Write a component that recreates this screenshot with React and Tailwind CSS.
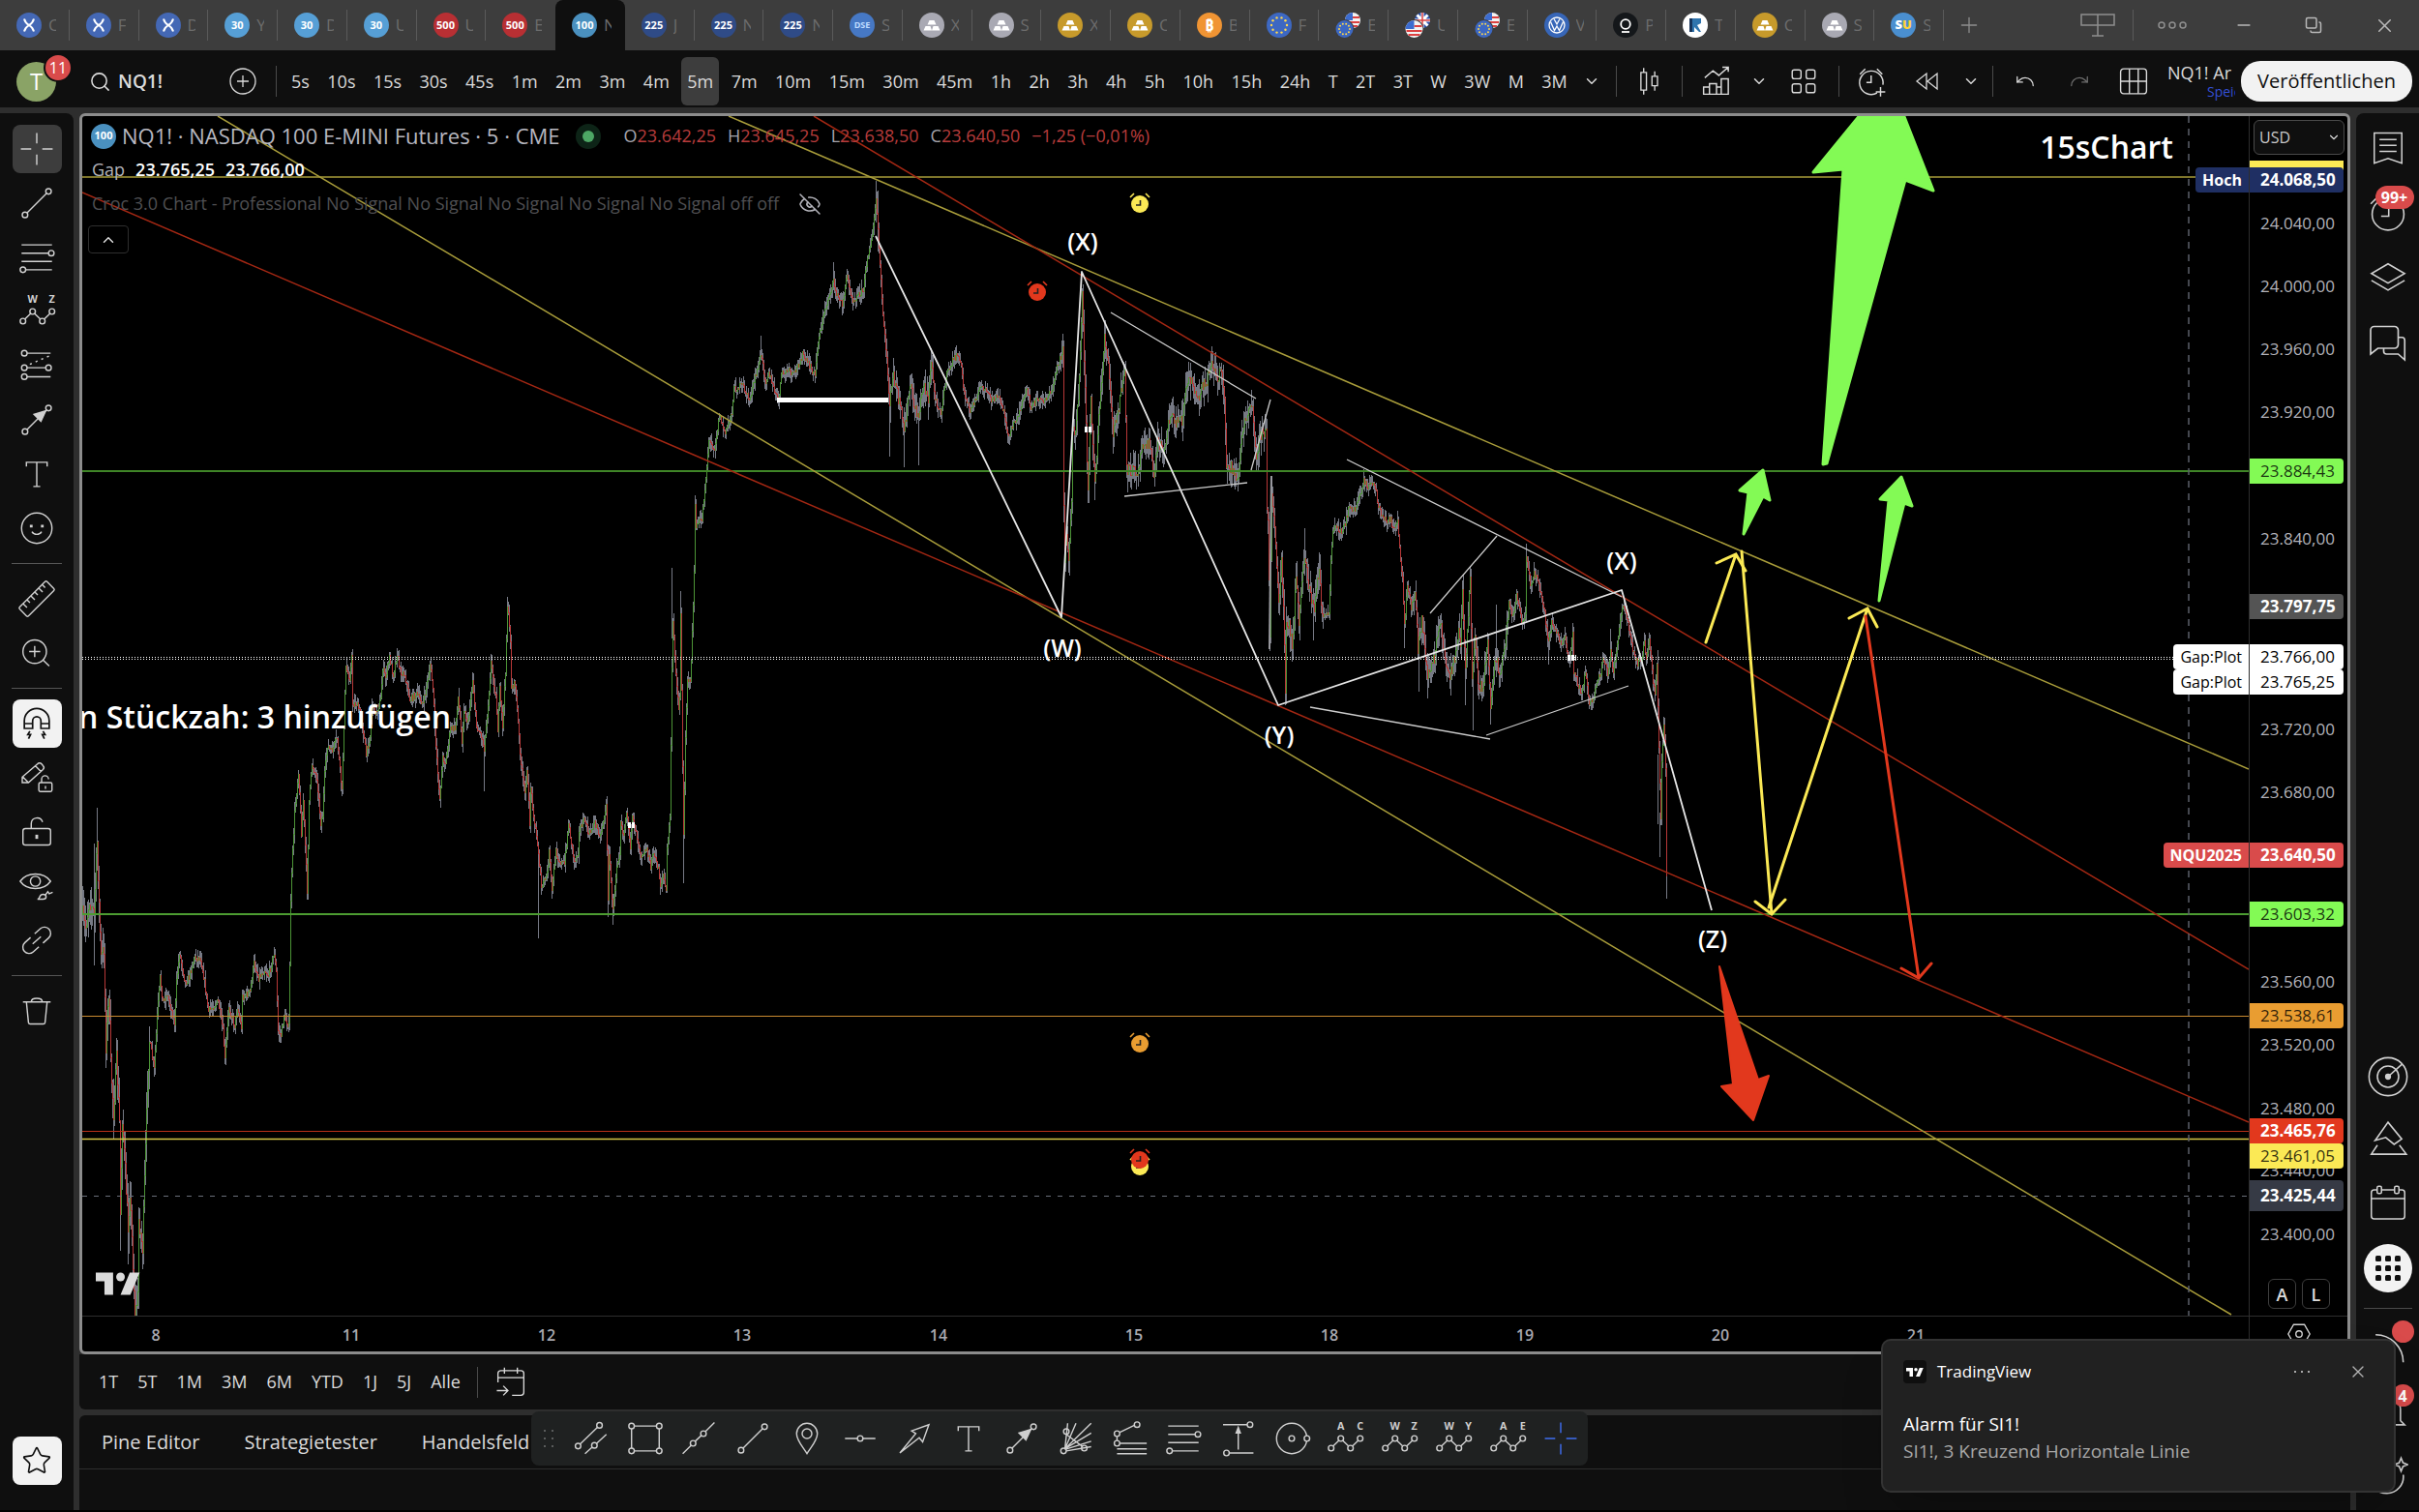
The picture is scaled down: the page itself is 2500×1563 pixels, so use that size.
import React from 'react';
import {
    Plus, Minus, X, Search, ChevronDown, ChevronUp, EyeOff, Copy, Star, Undo, Redo
} from 'lucide-react';

const TABS = [
    ['x', 'C'], ['x', 'F'], ['x', 'D'], ['30', 'Y'], ['30', 'D'], ['30', 'U'], ['500', 'U'], ['500', 'E'],
    ['100', 'N'], ['225', 'J'], ['225', 'N'], ['225', 'N'], ['dxy', 'S'], ['silver', 'X'], ['silver', 'S'],
    ['gold', 'X'], ['gold', 'C'], ['btc', 'B'], ['eu', 'F'], ['euus', 'E'], ['usgb', 'U'], ['euus', 'E'],
    ['vw', 'V'], ['pal', 'P'], ['rh', 'T'], ['gold', 'C'], ['silver', 'S'], ['su', 'S'],
];

const INTERVALS = [
    '5s', '10s', '15s', '30s', '45s', '1m', '2m', '3m', '4m', '5m', '7m', '10m', '15m', '30m', '45m',
    '1h', '2h', '3h', '4h', '5h', '10h', '15h', '24h', 'T', '2T', '3T', 'W', '3W', 'M', '3M',
];

const RANGES = ['1T', '5T', '1M', '3M', '6M', 'YTD', '1J', '5J', 'Alle'];

// price path of the 5m futures, x,y in plot units
const PATH = `85,945 88,958 92,930 97,945 99,890 100,870 102,935 104,990 107,980 109,1080 112,1025 114,1100 117,1150
120,1095 123,1160 124,1255 126,1155 129,1210 132,1270 134,1230 137,1305 139,1359 142,1340 143,1260 147,1290 149,1220
152,1120 154,1075 159,1105 162,1050 165,1010 168,1035 172,1027 176,1040 180,1057 182,1015 185,984 191,1015 195,1010
200,990 207,990 211,1015 215,1045 220,1040 225,1035 230,1065 232,1095 236,1040 242,1060 245,1040 249,1062 250,1030
258,1025 262,995 267,1010 273,1002 277,1008 283,985 285,1005 287,1065 290,1070 293,1050 298,1060 299,1000 300,930
302,880 304,840 308,797 311,860 313,827 317,920 319,827 322,790 327,803 331,850 333,843 335,800 338,770 342,777
348,763 353,818 355,747 357,690 361,700 363,680 364,727 368,727 373,740 378,780 382,760 384,727 388,737 393,723
395,690 398,700 402,679 406,697 410,675 413,693 418,697 423,723 430,717 437,727 442,700 444,686 447,710 450,773
454,825 457,783 460,788 465,753 470,753 473,720 477,765 479,733 483,747 487,713 488,702 492,750 497,760 500,773
504,727 507,684 512,720 514,753 516,713 519,750 522,693 524,625 527,660 528,710 532,707 535,747 538,790 542,820
544,793 547,850 548,813 552,850 556,880 559,918 565,903 567,880 570,920 574,880 578,890 583,893 587,850 593,890
597,880 598,857 604,847 608,863 614,850 620,863 626,833 628,927 629,880 633,942 637,893 640,880 641,847 644,863
647,837 651,880 653,840 657,860 662,883 668,877 672,897 674,880 680,897 682,915 685,903 688,922 689,877 692,843
694,693 695,643 698,693 701,733 702,720 703,632 705,793 706,865 708,760 710,700 713,707 715,653 717,593 718,524
719,543 725,536 729,494 732,455 738,463 743,429 749,448 756,425 758,402 767,398 774,413 778,398 783,379 786,366
791,394 794,383 798,398 804,415 807,387 814,383 820,387 829,366 834,375 842,387 845,352 850,329 856,306 861,291
865,306 870,314 875,285 881,310 892,299 896,264 901,245 905,205 908,256 912,325 916,371 919,417 923,387 929,417
934,444 940,398 946,425 949,429 954,394 959,413 962,373 966,413 972,425 978,387 986,368 992,371 996,406 1002,425
1008,410 1015,398 1024,413 1032,410 1038,429 1042,452 1048,436 1055,421 1061,402 1065,421 1071,413 1078,413
1086,406 1091,383 1095,370 1098,358 1099,524 1100,578 1102,547 1104,584 1107,524 1108,448 1112,440 1115,394
1118,295 1120,371 1124,505 1127,410 1131,500 1134,448 1138,394 1141,347 1145,379 1150,448 1155,425 1162,382
1164,486 1175,486 1181,456 1187,456 1192,492 1196,456 1202,463 1210,425 1213,436 1221,433 1225,402 1231,390
1238,415 1241,394 1246,398 1252,370 1257,394 1261,383 1265,410 1267,482 1272,482 1279,496 1283,452 1288,429
1294,421 1298,468 1303,448 1308,448 1309,524 1310,540 1312,655 1314,510 1317,540 1321,627 1324,580 1326,627
1328,718 1329,647 1332,647 1335,668 1339,597 1342,640 1348,573 1352,603 1358,633 1360,607 1363,590 1366,635
1373,637 1375,580 1377,550 1381,543 1385,550 1390,540 1394,523 1400,527 1405,510 1409,495 1413,503 1420,498
1424,523 1430,537 1437,537 1440,547 1444,540 1447,580 1449,600 1451,647 1454,607 1458,627 1462,613 1465,670
1469,640 1475,698 1482,680 1485,657 1488,642 1493,683 1498,697 1503,680 1507,653 1509,673 1511,607 1514,690
1519,595 1521,700 1524,657 1528,715 1533,703 1537,663 1540,731 1543,693 1546,680 1550,697 1555,670 1559,620
1563,637 1567,613 1572,641 1576,637 1577,573 1581,603 1585,593 1589,600 1593,617 1598,647 1600,665 1603,643
1613,665 1617,657 1621,683 1625,653 1626,693 1634,718 1638,693 1642,727 1646,723 1650,703 1654,697 1656,677
1661,697 1664,673 1667,695 1672,657 1677,623 1681,640 1687,673 1692,685 1696,680 1699,663 1701,685 1704,660
1708,705 1710,717 1712,687 1714,773 1716,847 1717,790 1719,747 1721,790 1722,907`;

// long wicks: x, top, bottom
const SPIKES = [
    [97, 872, 998], [100, 835, 900], [124, 1240, 1293], [132, 1260, 1307], [500, 760, 818], [556, 870, 970],
    [524, 617, 640], [628, 900, 948], [633, 930, 956], [694, 587, 660], [703, 611, 640], [706, 850, 913],
    [786, 347, 370], [861, 271, 300], [905, 187, 230], [907, 197, 260], [919, 410, 472], [934, 430, 483],
    [949, 420, 481], [1124, 480, 520], [1131, 480, 517], [1098, 351, 380], [1252, 358, 380], [1165, 480, 509],
    [1312, 620, 671], [1314, 492, 540], [1328, 700, 729], [1348, 546, 590], [1357, 630, 662], [1451, 630, 670],
    [1466, 670, 715], [1475, 690, 722], [1519, 587, 610], [1514, 690, 729], [1522, 700, 755], [1540, 720, 749],
    [1546, 625, 700], [1577, 562, 600], [1600, 660, 687], [1625, 645, 680], [1664, 650, 690], [1713, 672, 700],
    [1713, 780, 852], [1715, 840, 886], [1719, 741, 770], [1722, 853, 929], [1104, 560, 592],
];

function buildCandles() {
    const pts = PATH.trim().split(/\s+/).map(p => p.split(',').map(Number));
    let seed = 7;
    const rnd = () => {
        seed = (seed * 16807) % 2147483647;
        return seed / 2147483647;
    };
    let wick = '';
    let up = '';
    let down = '';
    let prev = pts[0][1];
    let i = 0;
    for (let x = 85; x <= 1722; x++) {
        while (i < pts.length - 2 && pts[i + 1][0] < x) i++;
        const [x0, y0] = pts[i];
        const [x1, y1] = pts[i + 1];
        const wild = x < 155 ? 22 : (x > 1095 && x < 1370) || (x > 915 && x < 965) ? 17 : x > 1460 && x < 1560 ? 16 : 9;
        const y = y0 + ((y1 - y0) * (x - x0)) / (x1 - x0) + (rnd() - 0.5) * wild * 0.8;
        const hi = Math.min(prev, y);
        const lo = Math.max(prev, y);
        const px = x + 0.5;
        wick += `M${px} ${Math.round(hi - rnd() * wild)}V${Math.round(lo + 1 + rnd() * wild)}`;
        const seg = `M${px} ${Math.round(hi)}V${Math.round(lo) + 1}`;
        if (y < prev) up += seg;
        else down += seg;
        prev = y;
    }
    SPIKES.forEach(([x, a, b]) => { wick += `M${x + 0.5} ${a}V${b}`; });
    return { wick, up, down };
}

const CANDLES = buildCandles();

const PRICES = [
    ['24.040,00', 231], ['24.000,00', 296], ['23.960,00', 361], ['23.920,00', 426], ['23.840,00', 557],
    ['23.720,00', 754], ['23.680,00', 819], ['23.560,00', 1015], ['23.520,00', 1080], ['23.480,00', 1146],
    ['23.440,00', 1210], ['23.400,00', 1276],
];

const TAGS = [
    { v: '24.068,50', y: 186, label: 'Hoch', c: 'h-[26px] bg-[#1f2f63] text-white font-bold' },
    { v: '23.884,43', y: 487, c: 'h-[26px] bg-[#83fa55] text-black/80' },
    { v: '23.797,75', y: 627, c: 'h-[26px] bg-[#545454] text-white font-bold' },
    { v: '23.766,00', y: 679, label: 'Gap:Plot', c: 'h-[26px] bg-white text-black' },
    { v: '23.765,25', y: 705, label: 'Gap:Plot', c: 'h-[26px] bg-white text-black' },
    { v: '23.640,50', y: 884, label: 'NQU2025', c: 'h-[26px] bg-[#d94b4b] text-white font-bold' },
    { v: '23.603,32', y: 945, c: 'h-[26px] bg-[#83fa55] text-black/80' },
    { v: '23.538,61', y: 1050, c: 'h-[26px] bg-[#e99d31] text-black/80' },
    { v: '23.465,76', y: 1169, c: 'h-[26px] bg-[#e2381d] text-white font-bold' },
    { v: '23.461,05', y: 1195, c: 'h-[26px] bg-[#fbe955] text-black/80' },
    { v: '23.425,44', y: 1236, c: 'h-[32px] bg-[#363a45] text-white font-bold' },
];

const DAYS = [['8', 161], ['11', 363], ['12', 565], ['13', 767], ['14', 970], ['15', 1172], ['18', 1374], ['19', 1576], ['20', 1778], ['21', 1980]];

/* ---------- icons ---------- */

function Icon({ className = 'size-10', w = 1, children }) {
    return (
        <svg viewBox="0 0 28 28" className={className} fill="none" stroke="currentColor" strokeWidth={w} aria-hidden="true">
            {children}
        </svg>
    );
}

const CrossIcon = () => <Icon><path d="M14 2.500V10M14 18v7.500M2.500 14H10M18 14h7.500" /></Icon>;
const LineIcon = () => (
    <Icon><circle cx="5.500" cy="22.500" r="2" /><circle cx="22.500" cy="5.500" r="2" /><path d="M7 21 21 7" /></Icon>
);
const FibIcon = () => (
    <Icon><path d="M3 5h22M3 11h19.500M3 17h22M6 23h19" /><circle cx="24.500" cy="11" r="2" /><circle cx="4" cy="23" r="2" /></Icon>
);
const WaveIcon = ({ a, b }) => (
    <Icon>
        <text x="11" y="7.500" fontSize="7.500" fontWeight="700" textAnchor="middle" fill="currentColor" stroke="none">{a}</text>
        <text x="25" y="7.500" fontSize="7.500" fontWeight="700" textAnchor="middle" fill="currentColor" stroke="none">{b}</text>
        <circle cx="4" cy="21" r="2" /><circle cx="11" cy="14" r="2" /><circle cx="18" cy="21" r="2" /><circle cx="25" cy="14" r="2" />
        <path d="m5.500 19.500 4-4M12.500 15.500l4 4M19.500 19.500l4-4" />
    </Icon>
);
const ForecastIcon = () => (
    <Icon>
        <circle cx="5" cy="5" r="2" /><circle cx="5" cy="15.500" r="2" /><circle cx="5" cy="22" r="2" /><circle cx="22.500" cy="15.500" r="2" />
        <path d="M7 5h17M7 15.500h13.500M7 22h17" /><path d="M9 13 23 7" strokeDasharray="1.500 3" />
    </Icon>
);
const ArrowMarkIcon = () => (
    <Icon>
        <circle cx="5.500" cy="22.500" r="2" /><circle cx="22.500" cy="5.500" r="2" /><path d="M7 21 21 7" />
        <path d="m20.500 7.500-3.500 7.500-5-5z" fill="currentColor" />
    </Icon>
);
const TextIcon = () => <Icon><path d="M6.500 8.500V5.500h15v3M14 5.500v17.500M11.500 23h5" /></Icon>;
const SmileIcon = () => (
    <Icon><circle cx="14" cy="14" r="11" /><path d="M10 11.500v2M18 11.500v2" strokeWidth="2" /><path d="M10.500 16.500c1.500 2.600 5.500 2.600 7 0" /></Icon>
);
const RulerIcon = () => (
    <Icon>
        <g transform="rotate(-45 14 14)"><rect x="0" y="9.500" width="28" height="9" rx="1" /><path d="M4.500 9.500v4M8.500 9.500v3M12.500 9.500v4M16.500 9.500v3M20.500 9.500v4M24 9.500v3" /></g>
    </Icon>
);
const ZoomIcon = () => <Icon><circle cx="12.500" cy="13" r="8.500" /><path d="M12.500 9v8M8.500 13h8M18.500 19l4.500 4.500" /></Icon>;
const MagnetIcon = () => (
    <Icon w={1.2}>
        <path d="M5 17.500V12a9 9 0 0 1 18 0v5.500h-6V12a3 3 0 0 0-6 0v5.500zM5 14h6M17 14h6" />
        <path d="m9 19.500-1.500 2.500h2L8 25M18.500 19.500l1.500 2.500h-2L19.500 25" />
    </Icon>
);
const PencilLockIcon = () => (
    <Icon>
        <path d="M3.500 17.500v-4L14.500 4a2 2 0 0 1 3 0l1 1.200a2 2 0 0 1 0 2.800L8 17.500zM4 13.500l4 4M13 5.500l4 4" />
        <rect x="15.500" y="17.500" width="9.500" height="6.500" rx="1" /><path d="M17.500 17.500V15a2.500 2.500 0 0 1 5 0M20.300 20v2" />
    </Icon>
);
const LockIcon = () => (
    <Icon><rect x="4" y="11.500" width="20" height="12" rx="1.800" /><path d="M10 11.500V8a4.200 4.200 0 0 1 8.200-1.200" /><path d="M14 16v3" strokeWidth="2" /></Icon>
);
const EyeIcon = () => (
    <Icon>
        <path d="M2 10.500C7 3.500 19 3.500 24 10.500 19 17.500 7 17.500 2 10.500z" /><circle cx="13" cy="10.500" r="3.600" />
        <path d="M14.500 23.500c2 0 1-3.500 4-3.500 3 0 3 3.500 0 3.500zM20.500 20l1.500-2 1 1.500 2.500-1" />
    </Icon>
);
const LinkIcon = () => (
    <Icon>
        <g transform="rotate(-42 14 14)"><path d="M12 9.500H6.500a4.500 4.500 0 0 0 0 9H12M16 9.500h5.500a4.500 4.500 0 0 1 0 9H16M10 14h8" /></g>
    </Icon>
);
const TrashIcon = () => <Icon><path d="M4 7.500h20M10 7.500c0-3.500 8-3.500 8 0M6.500 7.500l1.500 15c.1.600.5 1 1.200 1h9.600c.7 0 1.100-.4 1.200-1l1.500-15" /></Icon>;

const ChannelIcon = () => (
    <Icon><circle cx="4.500" cy="19.500" r="2" /><circle cx="20" cy="4.500" r="2" /><path d="M6 18 18.500 6M9.500 25l5-4.500M18 17.500l7-6.500" /><circle cx="16.300" cy="19" r="2" /></Icon>
);
const RectIcon = () => (
    <Icon>
        <circle cx="4" cy="5" r="2" /><circle cx="24" cy="5" r="2" /><circle cx="4" cy="23" r="2" /><circle cx="24" cy="23" r="2" />
        <path d="M6 5h16M6 23h16M4 7v14M24 7v14" />
    </Icon>
);
const ExtIcon = () => (
    <Icon><circle cx="10" cy="17.500" r="2" /><circle cx="17.500" cy="10.500" r="2" /><path d="m2.500 25 6-6M11.500 16l4.500-4.200M19 9l6.500-6.500" /></Icon>
);
const PinIcon = () => <Icon><path d="M14 25C11 20 6.500 15.500 6.500 10.500a7.500 7.500 0 0 1 15 0C21.500 15.500 17 20 14 25z" /><circle cx="14" cy="10.500" r="3.500" /></Icon>;
const HLineIcon = () => <Icon><path d="M3 14h9M16 14h9" /><circle cx="14" cy="14" r="2" /></Icon>;
const ArrowIcon = () => <Icon><path d="M3.500 24.500 15 10.500l-3-2L24.500 4 20 16.500l-2.500-3z" /></Icon>;
const FanIcon = () => (
    <Icon>
        <circle cx="5" cy="23" r="2" /><circle cx="7" cy="9" r="2" /><circle cx="20" cy="21" r="2" />
        <path d="M6 21.500 8 3M6 21.500 14 3M6 21.500 25 3M6 21.500 25 10M6 22l19-6M7 23l18-3M7 11l12 9" />
    </Icon>
);
const FibExtIcon = () => (
    <Icon>
        <circle cx="4.500" cy="10.500" r="2" /><circle cx="19" cy="4" r="2" /><circle cx="4.500" cy="17.500" r="2" />
        <path d="M6.500 9.500l10.500-5M4.500 12.500v3M6.500 17.500H26M4.500 21.500H26M4.500 25H26" />
    </Icon>
);
const RangeIcon = () => (
    <Icon><circle cx="23" cy="4" r="2" /><circle cx="6" cy="24.500" r="2" /><path d="M3.500 4H21M8 24.500h17.500M14.500 22V7" /><path d="m13 10 1.500-4 1.500 4z" fill="currentColor" /></Icon>
);
const CircleIcon = () => <Icon><circle cx="14" cy="14" r="11" /><circle cx="14" cy="14" r="2" /><circle cx="25" cy="14" r="2" fill="#1f2121" /></Icon>;

const SIDE_GROUPS = [
    [['Fadenkreuz', CrossIcon, 'bg-[#3d3d3d]'], ['Trendlinie', LineIcon], ['Fibonacci', FibIcon], ['Elliott', () => <WaveIcon a="W" b="Z" />], ['Prognose', ForecastIcon], ['Pfeil', ArrowMarkIcon], ['Text', TextIcon], ['Smiley', SmileIcon]],
    [['Lineal', RulerIcon], ['Zoom', ZoomIcon]],
    [['Magnet', MagnetIcon, 'bg-[#f2f2f2] text-[#0f0f0f]'], ['Zeichenmodus', PencilLockIcon], ['Sperren', LockIcon], ['Verbergen', EyeIcon], ['Synchronisieren', LinkIcon]],
    [['Entfernen', TrashIcon]],
];

const DRAW_TOOLS = [
    ChannelIcon, RectIcon, ExtIcon, LineIcon, PinIcon, HLineIcon, ArrowIcon, TextIcon, ArrowMarkIcon, FanIcon,
    FibExtIcon, FibIcon, RangeIcon, CircleIcon,
    () => <WaveIcon a="A" b="C" />, () => <WaveIcon a="W" b="Z" />, () => <WaveIcon a="W" b="Y" />, () => <WaveIcon a="A" b="E" />,
    () => <span className="text-[#3f6df0]"><CrossIcon /></span>,
];

function Bars({ bg }) {
    return (
        <svg viewBox="0 0 26 26" className="size-[26px]">
            <circle cx="13" cy="13" r="13" fill={bg} />
            <path d="M10.500 8h5l2 4.500h-9zM6.500 14h5l1.500 4.500H4.500zM14.500 14h5l2 4.500H13z" fill="#fff" />
        </svg>
    );
}

function Stars({ cx, cy, r, ring }) {
    return Array.from({ length: 10 }, (_, i) => {
        const a = (i * Math.PI) / 5;
        return <circle key={i} cx={cx + ring * Math.cos(a)} cy={cy + ring * Math.sin(a)} r={r} fill="#ffd84d" />;
    });
}

function FlagUS({ cx, cy, r }) {
    return (
        <g>
            <circle cx={cx} cy={cy} r={r} fill="#f3f3f3" />
            <path d={`M${cx - r + 1} ${cy + 2}H${cx + r - 1}M${cx - r + 3} ${cy + 6}H${cx + r - 3}M${cx} ${cy - 3}H${cx + r - 1}`} stroke="#dc4141" strokeWidth="2" />
            <path d={`M${cx - r} ${cy}A${r} ${r} 0 0 1 ${cx} ${cy - r}V${cy}z`} fill="#3c6ccf" />
        </g>
    );
}

function TabLogo({ kind }) {
    const text = 'flex size-[26px] shrink-0 items-center justify-center rounded-full text-[11px] font-bold text-white';
    switch (kind) {
        case 'x':
            return (
                <svg viewBox="0 0 26 26" className="size-[26px]">
                    <circle cx="13" cy="13" r="13" fill="#4468b5" />
                    <path d="M8 6.500c1 4 2.500 5 5 6.500s4 2.500 5 6.500M18 6.500c-1 4-2.500 5-5 6.500s-4 2.500-5 6.500" fill="none" stroke="#fff" strokeWidth="2" />
                </svg>
            );
        case '30': return <span className={`${text} bg-[#569fd6]`}>30</span>;
        case '500': return <span className={`${text} bg-[#b82f33]`}>500</span>;
        case '100': return <span className={`${text} bg-[#4a90bf]`}>100</span>;
        case '225': return <span className={`${text} bg-[#2f4b87]`}>225</span>;
        case 'dxy': return <span className="flex size-[26px] items-center justify-center rounded-full bg-[#4678c4] text-[9px] font-bold text-blue-200">DSE</span>;
        case 'silver': return <Bars bg="#a9a9b3" />;
        case 'gold': return <Bars bg="#c79a2b" />;
        case 'btc': return <span className="flex size-[26px] items-center justify-center rounded-full bg-[#f09433] text-[16px] font-bold text-white">₿</span>;
        case 'eu':
            return <svg viewBox="0 0 26 26" className="size-[26px]"><circle cx="13" cy="13" r="13" fill="#3d68c2" /><Stars cx={13} cy={13} r={1.2} ring={8} /></svg>;
        case 'euus':
            return (
                <svg viewBox="0 0 26 26" className="size-[26px]">
                    <FlagUS cx={18} cy={8} r={8} />
                    <circle cx="9.500" cy="17" r="10" fill="#3d3d3d" /><circle cx="9.500" cy="17" r="9" fill="#3d68c2" /><Stars cx={9.5} cy={17} r={1} ring={5.5} />
                </svg>
            );
        case 'usgb':
            return (
                <svg viewBox="0 0 26 26" className="size-[26px]">
                    <circle cx="18" cy="8" r="8" fill="#2f56b0" /><path d="M18 0v16M10 8h16M12.500 2.500l11 11M23.500 2.500l-11 11" stroke="#fff" strokeWidth="3" /><path d="M18 0v16M10 8h16" stroke="#dc4141" strokeWidth="1.500" />
                    <circle cx="9.500" cy="17" r="10" fill="#3d3d3d" /><FlagUS cx={9.5} cy={17} r={9} />
                </svg>
            );
        case 'vw':
            return (
                <svg viewBox="0 0 26 26" className="size-[26px]">
                    <circle cx="13" cy="13" r="13" fill="#3766b8" />
                    <circle cx="13" cy="13" r="8" fill="none" stroke="#fff" strokeWidth="1.300" />
                    <path d="M10 6.500 13 12l3-5.500M6.500 9.500l4 9L13 14l2.500 4.500 4-9" fill="none" stroke="#fff" strokeWidth="1.300" />
                </svg>
            );
        case 'pal':
            return (
                <svg viewBox="0 0 26 26" className="size-[26px]">
                    <circle cx="13" cy="13" r="13" fill="#14171a" /><circle cx="13" cy="12" r="4.800" fill="none" stroke="#fff" strokeWidth="1.800" /><path d="M9 20h8" stroke="#fff" strokeWidth="1.800" />
                </svg>
            );
        case 'rh':
            return (
                <svg viewBox="0 0 26 26" className="size-[26px]">
                    <circle cx="13" cy="13" r="13" fill="#fff" /><path d="M7 6v14h5v-5l5 5h2l-4-7 4-2V6z" fill="#2f74ad" /><path d="M7 6h3v14H7z" fill="#16335a" />
                </svg>
            );
        default: return <span className="flex size-[26px] items-center justify-center rounded-full bg-[#4a8fd0] text-[13px] font-extrabold text-white">S<span className="text-[#ffd23b]">U</span></span>;
    }
}

function TvMark({ className }) {
    return <svg viewBox="0 0 36 18" className={className} fill="currentColor" aria-hidden="true"><path d="M14 18H7V7H0V0h14zM28 18h-8L27.500 0h8z" /><circle cx="20" cy="3.500" r="3.500" /></svg>;
}

/* ---------- window chrome ---------- */

function TabStrip() {
    return (
        <div className="flex h-[52px] bg-[#3d3d3d] text-[#b8b8b8]">
            <div className="flex min-w-0 flex-1">
                {TABS.map(([kind, letter], i) => (
                    <button
                        key={i}
                        className={`relative flex flex-1 items-center pl-[17px] ${i === 8 ? 'rounded-t-lg bg-[#0f0f0f]' : ''}`}
                    >
                        <TabLogo kind={kind} />
                        <span className="ml-[7px] w-[8px] overflow-hidden text-left text-[17px] text-[#6c6c6c]">{letter}</span>
                        {i !== 7 && i !== 8 && <span className="absolute right-0 top-[10px] h-8 w-px bg-[#5a5a5a]" />}
                    </button>
                ))}
            </div>
            <div className="flex w-[491px] items-center">
                <button className="flex w-[52px] justify-center" aria-label="Neuer Tab"><Plus size={26} strokeWidth={1.2} className="text-[#8e8e8e]" /></button>
                <div className="flex-1" />
                <button className="mr-[18px] text-[#8e8e8e]" aria-label="Fenster">
                    <svg viewBox="0 0 36 26" className="h-[26px] w-9" fill="none" stroke="currentColor" strokeWidth="1.500"><path d="M1 2h34v11H1zM18 2v22M12 24h12" /></svg>
                </button>
                <span className="h-8 w-px bg-[#5a5a5a]" />
                <button className="flex w-[80px] justify-center text-[#8e8e8e]" aria-label="Menü">
                    <svg viewBox="0 0 30 8" className="h-2 w-[30px]" fill="none" stroke="currentColor" strokeWidth="1.500"><circle cx="4" cy="4" r="3" /><circle cx="15" cy="4" r="3" /><circle cx="26" cy="4" r="3" /></svg>
                </button>
                <button className="flex w-[67px] justify-center" aria-label="Minimieren"><Minus size={20} strokeWidth={2} /></button>
                <button className="flex w-[77px] justify-center" aria-label="Wiederherstellen"><Copy size={18} strokeWidth={2} className="-scale-x-100 rotate-90" /></button>
                <button className="flex w-[71px] justify-center" aria-label="Schließen"><X size={23} strokeWidth={1.6} /></button>
            </div>
        </div>
    );
}

const Divider = ({ className = '' }) => <span className={`h-8 w-px shrink-0 bg-[#4a4a4a] ${className}`} />;

function TopBar() {
    const cell = 'flex shrink-0 justify-center';
    return (
        <div className="flex h-[59px] items-center bg-[#0f0f0f] pt-[5px] text-[18px] text-[#dbdbdb]">
            <button className="relative ml-[17px] flex size-[41px] shrink-0 items-center justify-center rounded-full bg-[#8aa366] text-[24px] text-white">
                T
                <span className="absolute -right-[17px] -top-[9px] flex size-[30px] items-center justify-center rounded-full border-2 border-[#0f0f0f] bg-[#d94b4b] text-[16px]">11</span>
            </button>
            <button className="ml-[34px] flex w-[145px] shrink-0 items-center gap-[7px] text-[19px] font-semibold">
                <Search size={23} strokeWidth={1.6} className="shrink-0" /> NQ1!
            </button>
            <button aria-label="Vergleichen" className="shrink-0">
                <Icon className="size-[28px]" w={1.3}><circle cx="14" cy="14" r="13" /><path d="M14 8v12M8 14h12" /></Icon>
            </button>
            <Divider className="ml-[20px] mr-[9px]" />
            <div className="flex min-w-0 flex-1 items-center justify-between">
                {INTERVALS.map(t => (
                    <button key={t} className={`h-[50px] rounded-md px-[6px] ${t === '5m' ? 'bg-[#3d3d3d]' : ''}`}>{t}</button>
                ))}
            </div>
            <button className="ml-[10px] mr-[16px] shrink-0" aria-label="Mehr Intervalle"><ChevronDown size={18} /></button>
            <div className="flex shrink-0 items-center">
                <Divider />
                <button className={`${cell} w-[67px]`} aria-label="Kerzen"><Icon className="size-[32px]" w={1.2}><path d="M8.500 2v4M8.500 22v4M18.500 5v4.500M18.500 18v4.500M6 6h5v16H6zM16 9.500h5V18h-5z" /></Icon></button>
                <Divider />
                <button className={`${cell} w-[70px]`} aria-label="Indikatoren"><Icon className="size-[34px]" w={1.2}><path d="m4 11 7-6 5 4 8-7M19 2h5v4M3 25v-6h5v6zM8 25v-9h6v9zM14 25v-6h4v6zM18 25V12h6v13z" /></Icon></button>
                <button className={`${cell} w-[18px]`} aria-label="Mehr Indikatoren"><ChevronDown size={18} /></button>
                <button className={`${cell} w-[73px]`} aria-label="Vorlagen"><Icon className="size-[30px]" w={1.3}><rect x="3" y="3" width="8.500" height="8.500" rx="2" /><rect x="16.500" y="3" width="8.500" height="8.500" rx="2" /><rect x="3" y="16.500" width="8.500" height="8.500" rx="2" /><rect x="16.500" y="16.500" width="8.500" height="8.500" rx="2" /></Icon></button>
                <Divider />
                <button className={`${cell} w-[67px]`} aria-label="Alarm"><Icon className="size-[34px]" w={1.2}><path d="M18 24a10 10 0 1 1 5-7M13 9v6H9M3.500 8 8 3.500M18 3.500 22.500 8M21 19v8M17 23h8" /></Icon></button>
                <button className={`${cell} w-[47px]`} aria-label="Replay"><Icon className="size-[28px]" w={1.3}><path d="M13 6v16L3 14zM24 6v16l-10-8z" /></Icon></button>
                <button className={`${cell} w-[44px]`} aria-label="Mehr"><ChevronDown size={18} /></button>
                <Divider />
                <button className={`${cell} w-[66px]`} aria-label="Rückgängig"><Undo size={22} strokeWidth={1.4} /></button>
                <button className={`${cell} w-[46px] text-[#6e6e6e]`} aria-label="Wiederholen"><Redo size={22} strokeWidth={1.4} /></button>
                <button className={`${cell} w-[66px]`} aria-label="Layout"><Icon className="size-[30px]" w={1.3}><rect x="1.500" y="2" width="25" height="24" rx="3" /><path d="M10 2v24M18.500 2v24M1.500 14h25" /></Icon></button>
            </div>
            <div className="ml-[2px] w-[70px] shrink-0 overflow-hidden whitespace-nowrap leading-[22px]">
                <div>NQ1! Ar</div>
                <div className="ml-[41px] text-[14px] leading-[18px] text-[#3450d8]">Speichern</div>
            </div>
            <button className="ml-[6px] mr-[7px] h-[42px] w-[177px] shrink-0 rounded-[20px] bg-[#f2f2f2] text-[20px] text-[#0f0f0f]">Veröffentlichen</button>
        </div>
    );
}

function LeftRail() {
    return (
        <div className="flex w-[76px] flex-col items-center rounded-tr-lg bg-[#0f0f0f] pb-[26px] pt-[12px] text-[#d1d1d1]">
            {SIDE_GROUPS.map((group, i) => (
                <React.Fragment key={i}>
                    {i > 0 && <span className="my-[11px] h-px w-[52px] shrink-0 bg-[#555]" />}
                    <div className="flex flex-col gap-[6px]">
                        {group.map(([label, Ico, cls = '']) => (
                            <button key={label} aria-label={label} className={`flex h-[50px] w-[51px] items-center justify-center rounded-lg ${cls}`}><Ico /></button>
                        ))}
                    </div>
                </React.Fragment>
            ))}
            <button aria-label="Favoriten" className="mt-auto flex h-[50px] w-[51px] items-center justify-center rounded-lg bg-[#f2f2f2] text-[#0f0f0f]"><Star size={32} strokeWidth={1.2} /></button>
        </div>
    );
}

function RightRail() {
    const btn = 'relative flex size-[50px] shrink-0 items-center justify-center rounded-full';
    return (
        <div className="flex w-[65px] flex-col items-center justify-between rounded-tl-lg bg-[#0f0f0f] pb-[10px] pt-[11px] text-[#d1d1d1]">
            <div className="flex flex-col gap-[17px]">
                <button className={btn} aria-label="Watchlist"><Icon className="size-[38px]" w={1.1}><path d="M3.500 2.500h21v23L14 22 3.500 25.500zM7.500 7.500h13M7.500 12h13M7.500 16.500h13" /></Icon></button>
                <button className={btn} aria-label="Alarme">
                    <Icon className="size-[40px]" w={1.1}><circle cx="14" cy="15" r="11.500" /><path d="M14.500 9v7.500H9M1.500 7.500l5-5M21.500 2.500l5 5" /></Icon>
                    <span className="absolute -right-[2px] -top-[3px] flex h-[24px] w-[40px] items-center justify-center rounded-full bg-[#d94b4b] text-[16px] font-bold text-white">99+</span>
                </button>
                <button className={btn} aria-label="Objekte"><Icon className="size-[40px]" w={1.1}><path d="M14 4 26 11 14 18 2 11zM2 16l12 7 12-7" /></Icon></button>
                <button className={btn} aria-label="Chat"><Icon className="size-[42px]" w={1.1}><path d="M2 22V5.500A2.500 2.500 0 0 1 4.500 3h14A2.500 2.500 0 0 1 21 5.500v10a2.500 2.500 0 0 1-2.500 2.500H7zM21 10.500h2.500A2 2 0 0 1 25.500 12.500V26l-4.500-4h-8a2 2 0 0 1-2-2v-2" /></Icon></button>
            </div>
            <div className="flex flex-col gap-4">
                <button className={btn} aria-label="Screener"><Icon className="size-[44px]"><circle cx="14" cy="14" r="12.500" /><circle cx="14" cy="14" r="7" /><circle cx="14" cy="14" r="1.500" fill="currentColor" /><path d="m14 14 9-8" /></Icon></button>
                <button className={btn} aria-label="Ideen"><Icon className="size-[44px]"><path d="M5.500 14 14 2l9 11-5 3.500-5.500-4.500zM7 17l-4 6h23l-4.500-6" /></Icon></button>
                <button className={btn} aria-label="Kalender"><Icon className="size-[42px]"><rect x="2.500" y="4" width="23" height="20" rx="2" /><path d="M2.500 10h23" /><rect x="6.500" y="1.500" width="3" height="5" rx="1" fill="#0f0f0f" /><rect x="18.500" y="1.500" width="3" height="5" rx="1" fill="#0f0f0f" /></Icon></button>
                <button className={`${btn} bg-[#f2f2f2] text-[#0f0f0f]`} aria-label="Mehr">
                    <svg viewBox="0 0 28 28" className="size-[28px]" fill="currentColor">
                        {[1, 11, 21].map(y => [1, 11, 21].map(x => <rect key={`${x}-${y}`} x={x} y={y} width="6" height="6" rx="1.500" />))}
                    </svg>
                </button>
                <span className="h-px w-[50px] bg-[#4a4a4a]" />
                <button className={btn} aria-label="Streams">
                    <Icon className="size-[40px]" w={1.1}><path d="M5 4a20 20 0 0 1 20 20M5 11a13 13 0 0 1 13 13" /></Icon>
                    <span className="absolute -right-[2px] -top-[4px] size-[23px] rounded-full bg-[#d94b4b]" />
                </button>
                <button className={btn} aria-label="Benachrichtigungen">
                    <Icon className="size-[40px]" w={1.1}><path d="M5 20V12a9 9 0 0 1 18 0v8l3 3H2zM11 24a3 3 0 0 0 6 0" /></Icon>
                    <span className="absolute -right-[2px] -top-[4px] flex size-[23px] items-center justify-center rounded-full bg-[#d94b4b] text-[16px] font-bold text-white">4</span>
                </button>
                <button className={btn} aria-label="Assistent"><Icon className="size-[42px]" w={1.1}><path d="M24.500 13A11.500 11.500 0 1 1 15 3M23 1.500l1.300 3.200L27.500 6l-3.200 1.300L23 10.500l-1.300-3.200L18.500 6l3.200-1.300z" /></Icon></button>
            </div>
        </div>
    );
}

/* ---------- chart ---------- */

function Alarm({ x, y, color }) {
    return (
        <g transform={`translate(${x} ${y})`}>
            <circle r="9" fill={color} /><path d="M.500-4V1H-4" fill="none" stroke="#222" strokeWidth="1.600" />
            <path d="m-10-7 4-4M10-7 6-11" stroke={color} strokeWidth="1.600" />
        </g>
    );
}

function Plot() {
    return (
        <svg viewBox="85 120 2239 1240" preserveAspectRatio="none" className="block size-full">
            <g shapeRendering="crispEdges" strokeWidth="1">
                <path d={CANDLES.wick} stroke="#767984" />
                <path d={CANDLES.up} stroke="#4c9436" />
                <path d={CANDLES.down} stroke="#b83838" />
            </g>
            <g strokeWidth="1.500" fill="none">
                <path d="M85 183H2324" stroke="#a89c3a" />
                <path d="M85 487H2324" stroke="#3f8527" strokeWidth="2" />
                <path d="M85 945H2324" stroke="#4c9c31" strokeWidth="2" />
                <path d="M85 1050.500H2324" stroke="#c98a30" strokeWidth="1" />
                <path d="M85 1169.500H2324" stroke="#b83018" strokeWidth="1" />
                <path d="M85 1177.500H2324" stroke="#d6c646" />
                <path d="M225 120 2306 1359M753 120 2324 795" stroke="#a89c3a" />
                <path d="M85 199 2324 1160M841 120 2324 1002" stroke="#a32713" />
            </g>
            <path d="M85 679.500H2324M85 681.500H2324" stroke="#fff" strokeDasharray="1 2" shapeRendering="crispEdges" />
            <path d="M85 1236.500H2324" stroke="#6a6e79" strokeDasharray="5 7" />
            <path d="M2262 120V1360" stroke="#5b5f6a" strokeWidth="1.500" strokeDasharray="7 6" />
            <g stroke="#e6e6e6" strokeWidth="1.800" fill="none" strokeLinejoin="round">
                <path d="M905 244 1097 638 1118 281 1321 729 1676 610 1769 941" />
                <g strokeWidth="1.300" stroke="#cccccc">
                    <path d="M1148 323 1298 412M1162 513 1289 499M1313 413 1293 486M1392 475 1676 617M1547 554 1478 634M1354 731 1540 764M1536 760 1683 709" />
                </g>
            </g>
            <path d="M1314 492 1312 671" stroke="#9a9aa0" strokeWidth="2" />
            <path d="M803 413.500H918" stroke="#fff" strokeWidth="5" />
            <path d="M1121 444h7M1620 680h9M649 853h7" stroke="#fff" strokeWidth="6" strokeDasharray="3 1" />

            <g fill="#83fa55" stroke="#83fa55" strokeWidth="3" strokeLinejoin="round">
                <path d="M1884 480 1905 175 1874 178 1923 118H1967L1998 197 1969 186 1888 479z" />
                <path d="M1802 552 1807 509 1798 507 1822 486 1829 517 1822 513z" />
                <path d="M1942 621 1952 517 1943 516 1965 493 1976 523 1968 520z" />
            </g>
            <path d="M1777 999 1817 1116 1828 1112 1812 1158 1779 1123 1791 1121z" fill="#e2381d" stroke="#e2381d" strokeWidth="2" strokeLinejoin="round" />
            <g fill="none" stroke="#fbe955" strokeWidth="3" strokeLinecap="round">
                <path d="M1763 664 1794 573M1774 582 1794 573 1804 590" />
                <path d="M1800 570 1831 945M1814 932 1831 945 1845 930" />
                <path d="M1828 938 1930 629M1911 639 1930 629 1940 648" />
                <path d="M1928 637 1983 1011M1965 1001 1983 1011 1996 996" stroke="#e2381d" />
            </g>
            <Alarm x={1178} y={211} color="#fbe955" />
            <Alarm x={1072} y={302} color="#e2381d" />
            <Alarm x={1178} y={1079} color="#e99d31" />
            <Alarm x={1178} y={1206} color="#fbe955" />
            <Alarm x={1178} y={1199} color="#e2381d" />

            <g fill="#fff" fontSize="25" fontWeight="600" textAnchor="middle">
                <text x="1119" y="259">(X)</text>
                <text x="1098" y="679">(W)</text>
                <text x="1322" y="769">(Y)</text>
                <text x="1676" y="589">(X)</text>
                <text x="1770" y="980">(Z)</text>
            </g>
            <g fill="#fff" fontSize="32" fontWeight="600" textAnchor="end">
                <text x="2246" y="164">15sChart</text>
                <text x="466" y="753">n Stückzah: 3 hinzufügen</text>
            </g>
        </svg>
    );
}

function Legend() {
    const row = 'flex h-[35px] items-center whitespace-nowrap';
    const ohlc = [['O', '23.642,25'], ['H', '23.645,25'], ['L', '23.638,50'], ['C', '23.640,50']];
    return (
        <div className="absolute left-[6px] top-[3px] text-[18px]">
            <div className={`${row} pl-[3px]`}>
                <span className="flex size-[26px] items-center justify-center rounded-full bg-[#4a90bf] text-[11px] font-bold text-white">100</span>
                <span className="ml-[6px] text-[22px] text-[#b8b8c0]">NQ1! · NASDAQ 100 E-MINI Futures · 5 · CME</span>
                <span className="ml-[16px] flex size-[26px] items-center justify-center rounded-full bg-[#0d2417]"><span className="size-[12px] rounded-full bg-[#4da765]" /></span>
                <span className="ml-[24px] flex gap-[12px] text-[#b83c3c]">
                    {ohlc.map(([k, v]) => <span key={k}><span className="text-[#a5a5ac]">{k}</span>{v}</span>)}
                    <span>−1,25 (−0,01%)</span>
                </span>
            </div>
            <div className={`${row} gap-[11px] pl-[4px] font-semibold text-white`}>
                <span className="font-normal text-[#b4b4bb]">Gap</span><span>23.765,25</span><span>23.766,00</span>
            </div>
            <div className={`${row} gap-[20px] pl-[4px] text-[#4f4f52]`}>
                Croc 3.0 Chart - Professional No Signal No Signal No Signal No Signal No Signal off off
                <EyeOff size={24} strokeWidth={1.5} className="text-[#b4b4bb]" />
            </div>
            <button aria-label="Legende einklappen" className="mt-[5px] flex h-[29px] w-[42px] items-center justify-center rounded border border-[#2e2e2e] bg-black text-[#dbdbdb]"><ChevronUp size={18} /></button>
        </div>
    );
}

function PriceAxis() {
    return (
        <div className="relative w-[102px] shrink-0 border-l border-[#2e2e2e] text-[17px] text-[#b2b2b9]">
            <label className="absolute left-[4px] top-[4px] block">
                <span className="sr-only">Währung</span>
                <select className="h-[36px] w-[94px] appearance-none rounded-md border border-[#4a4a4a] bg-[#0f0f0f] pl-[5px] text-[16px] text-[#c8c8c8]">
                    <option>USD</option>
                </select>
                <ChevronDown size={14} className="absolute right-[4px] top-[11px] text-[#dbdbdb]" />
            </label>
            <div className="absolute left-0 top-[46px] h-[10px] w-[97px] bg-[#fbe955]" />
            {PRICES.map(([v, y]) => (
                <span key={v} className="absolute left-[11px] leading-[26px]" style={{ top: y - 133 }}>{v}</span>
            ))}
            {TAGS.map(({ v, y, label, c }) => (
                <div key={v} className="absolute right-[4px] flex -translate-y-1/2 items-center justify-end" style={{ top: y - 120 }}>
                    {label && <span className={`mr-px flex items-center whitespace-nowrap rounded-l px-[7px] text-[16px] ${c}`}>{label}</span>}
                    <span className={`flex w-[97px] items-center rounded-r pl-[11px] ${c}`}>{v}</span>
                </div>
            ))}
            <div className="absolute left-[19px] top-[1202px] flex gap-[6px] text-[18px] font-semibold text-[#dbdbdb]">
                <button className="h-[31px] w-[29px] rounded-md border border-[#3d3d3d] leading-none">A</button>
                <button className="h-[31px] w-[29px] rounded-md border border-[#3d3d3d] leading-none">L</button>
            </div>
        </div>
    );
}

function Chart() {
    return (
        <div className="flex min-h-0 flex-1 flex-col overflow-hidden rounded-md border-[3px] border-[#8c8c8c] bg-black">
            <div className="flex min-h-0 flex-1">
                <div className="relative min-w-0 flex-1">
                    <Plot />
                    <Legend />
                </div>
                <PriceAxis />
            </div>
            <div className="flex h-[37px] shrink-0 border-t border-[#2e2e2e]">
                <div className="relative flex-1 text-[16px] font-semibold text-[#a9a9b0]">
                    {DAYS.map(([d, x]) => (
                        <span key={d} className="absolute top-[7px] -translate-x-1/2 leading-[24px]" style={{ left: x - 85 }}>{d}</span>
                    ))}
                </div>
                <button aria-label="Chart-Einstellungen" className="flex w-[102px] items-center justify-center border-l border-[#2e2e2e] text-[#d1d1d1]">
                    <Icon className="size-[26px]" w={1.5}><path d="M8 3.500h12L26 14l-6 10.500H8L2 14z" /><circle cx="14" cy="14" r="3.500" /></Icon>
                </button>
            </div>
        </div>
    );
}

function RangeBar() {
    return (
        <div className="flex h-[57px] shrink-0 items-center rounded-b-md bg-[#0f0f0f] pl-[20px] text-[18px] text-[#dbdbdb]">
            <div className="flex gap-[20px]">
                {RANGES.map(r => <button key={r}>{r}</button>)}
            </div>
            <Divider className="mx-[17px]" />
            <button aria-label="Gehe zu Datum">
                <Icon className="size-[34px]" w={1.1}><path d="M3 14V6.500A2.500 2.500 0 0 1 5.500 4h17A2.500 2.500 0 0 1 25 6.500v16a2.500 2.500 0 0 1-2.500 2.500H15M3 10h22M8.500 1.500v5M19.500 1.500v5M2 21h9M7.500 17l4 4-4 4" /></Icon>
            </button>
        </div>
    );
}

function BottomPanel() {
    return (
        <div className="relative mt-[6px] h-[98px] shrink-0 rounded-t-md bg-[#0f0f0f]">
            <div className="flex h-[56px] items-center gap-[46px] border-b border-[#2e2e2e] pl-[23px] text-[20px] text-[#dbdbdb]">
                <button>Pine Editor</button>
                <button>Strategietester</button>
                <button>Handelsfeld</button>
            </div>
            <div className="absolute -top-[4px] left-[467px] flex h-[56px] w-[1092px] items-center rounded-lg bg-[#1f2121] text-[#cfcfcf]">
                <svg viewBox="0 0 12 20" className="ml-[12px] mr-[10px] h-5 w-3 shrink-0" fill="#5a5c5c">
                    {[1, 9, 17].map(y => [1, 9].map(x => <rect key={`${x}-${y}`} x={x} y={y} width="2" height="2" />))}
                </svg>
                {DRAW_TOOLS.map((Ico, i) => (
                    <button key={i} aria-label={`Werkzeug ${i + 1}`} className="flex h-full min-w-0 flex-1 items-center justify-center"><Ico /></button>
                ))}
            </div>
        </div>
    );
}

function Toast() {
    return (
        <div className="absolute bottom-[20px] right-[24px] h-[159px] w-[532px] rounded-[10px] border-2 border-[#333] bg-[#212121] px-[21px] pt-[20px] shadow-2xl">
            <div className="flex h-[24px] items-center text-[17px] text-white">
                <span className="flex size-[24px] items-center justify-center rounded bg-[#0f0f0f]"><TvMark className="h-[9px] w-[18px]" /></span>
                <span className="ml-[11px] flex-1">TradingView</span>
                <button aria-label="Optionen" className="mr-[40px] flex gap-[5px]">
                    <i className="size-[2px] bg-[#aaa]" /><i className="size-[2px] bg-[#aaa]" /><i className="size-[2px] bg-[#aaa]" />
                </button>
                <button aria-label="Schließen" className="mr-[6px] text-[#b0b0b0]"><X size={20} strokeWidth={1.6} /></button>
            </div>
            <p className="mt-[28px] text-[19px] leading-[28px] text-white">Alarm für SI1!</p>
            <p className="text-[19px] leading-[28px] text-[#a8a8a8]">SI1!, 3 Kreuzend Horizontale Linie</p>
        </div>
    );
}

export default function App() {
    return (
        <div className="relative flex h-screen flex-col overflow-hidden bg-black pb-[2px] font-['Open_Sans','Noto_Sans',sans-serif]">
            <TabStrip />
            <TopBar />
            <div className="flex min-h-0 flex-1 gap-[6px] bg-[#2e2e2e] pt-[6px]">
                <LeftRail />
                <div className="flex min-w-0 flex-1 flex-col">
                    <div className="flex min-h-0 flex-1 flex-col">
                        <Chart />
                    </div>
                    <RangeBar />
                    <BottomPanel />
                </div>
                <RightRail />
            </div>
            <TvMark className="absolute left-[99px] top-[1315px] h-[24px] w-[46px] text-[#dbdbdb]" />
            <Toast />
        </div>
    );
}
